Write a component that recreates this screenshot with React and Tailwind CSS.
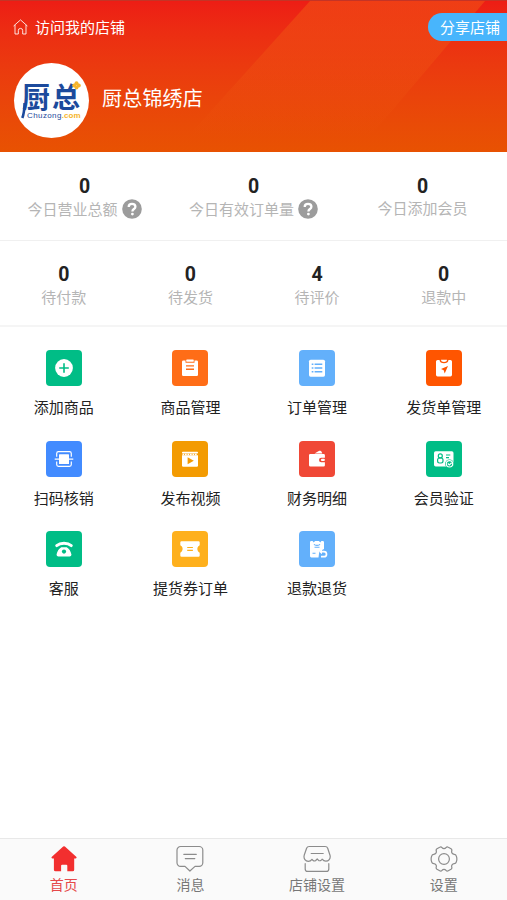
const todayStats = [
  { label: '今日营业总额', value: 0, help: true },
  { label: '今日有效订单量', value: 0, help: true },
  { label: '今日添加会员', value: 0 },
];

const orderStats = [
  { label: '待付款', value: 0 },
  { label: '待发货', value: 0 },
  { label: '待评价', value: 4 },
  { label: '退款中', value: 0 },
];

// Menu glyphs, all drawn on the 36px tile grid
const AddIcon = () => (
  <>
    <circle cx="18" cy="18" r="8.9" fill="#fff" />
    <path d="M18 13.2v9.600M13.200 18h9.600" stroke="#00bd86" strokeWidth="1.600" />
  </>
);

const GoodsIcon = () => (
  <>
    <path d="M11.300 10.500h2.200v2.200h9v-2.200h2.200a1.300 1.300 0 0 1 1.300 1.300v13a1.300 1.300 0 0 1-1.300 1.300H11.300a1.300 1.300 0 0 1-1.300-1.300v-13a1.300 1.300 0 0 1 1.300-1.300z" fill="#fff" />
    <rect x="14.300" y="9.600" width="7.400" height="2.200" rx=".6" fill="#fff" />
    <path d="M14 15.900h8M14 19.200h8" stroke="#ff6d17" strokeWidth="1.400" />
  </>
);

const OrderIcon = () => (
  <>
    <rect x="10" y="9.700" width="16" height="17" rx="1.600" fill="#fff" />
    <path d="M12.700 14.200h1.700M12.700 18h1.700M12.700 21.800h1.700M15.600 14.200h7.700M15.600 18h7.700M15.600 21.800h7.700" stroke="#63b0fb" strokeWidth="1.400" />
  </>
);

const DeliveryIcon = () => (
  <>
    <path d="M11.600 10h1.900c.3 2.200 1.800 3.200 4.500 3.200s4.200-1 4.500-3.200h1.900a1.600 1.600 0 0 1 1.600 1.600v13.200a1.600 1.600 0 0 1-1.600 1.600H11.600a1.600 1.600 0 0 1-1.600-1.600V11.600a1.600 1.600 0 0 1 1.600-1.600z" fill="#fff" />
    <path d="M15 9.700h6c0 1.600-1.200 2.200-3 2.200s-3-.6-3-2.200z" fill="#fff" />
    <path d="M22 16l-7 3.100 2.700 1.200 1 3.300z" fill="#ff5500" />
  </>
);

const ScanIcon = () => (
  <>
    <path d="M10.700 15.800v-3.300a1.800 1.800 0 0 1 1.800-1.800h11a1.800 1.800 0 0 1 1.800 1.800v3.300M10.700 20.500v3a1.800 1.800 0 0 0 1.800 1.800h11a1.800 1.800 0 0 0 1.800-1.800v-3" fill="none" stroke="#fff" strokeWidth="1.200" />
    <rect x="13" y="13.200" width="10" height="9.800" rx=".6" fill="#fff" />
    <path d="M8.700 18.200h18.600" stroke="#fff" strokeWidth="1.200" />
  </>
);

const VideoIcon = () => (
  <>
    <rect x="10" y="10.800" width="16" height="1.800" rx=".8" fill="#fff" />
    <path d="M10.500 13.500h15" stroke="#fff" strokeWidth="1.500" strokeDasharray="1.700 .8" />
    <path d="M10 14.300h16v10.300a1.200 1.200 0 0 1-1.200 1.200H11.200a1.200 1.200 0 0 1-1.200-1.200z" fill="#fff" />
    <path d="M15.600 16.300l6.200 3.500-6.200 3.500z" fill="#f39b02" />
  </>
);

const FinanceIcon = () => (
  <>
    <path d="M11.400 13h13.200a1.300 1.300 0 0 1 1.300 1.300v2.400h-3.600a2.300 2.300 0 0 0 0 4.600h3.600v3a1.300 1.300 0 0 1-1.300 1.300H11.400a1.400 1.400 0 0 1-1.400-1.300V14.300A1.300 1.300 0 0 1 11.400 13z" fill="#fff" />
    <path d="M15.500 12.400l4.300-2.400c1.200-.6 2.400 0 2.900 1l.6 1.400z" fill="#fff" />
    <rect x="21.900" y="17.800" width="4" height="2.300" rx="1.100" fill="#fff" />
  </>
);

const MemberIcon = () => (
  <>
    <rect x="8" y="10.300" width="19.500" height="15.200" rx="1.700" fill="#fff" />
    <g fill="none" stroke="#00bd86" strokeWidth="1.200">
      <circle cx="14.300" cy="14.900" r="2" />
      <rect x="11.600" y="17" width="5.400" height="5" rx="1.900" />
      <path d="M20 14h4.300M20 16.700h3" />
    </g>
    <circle cx="23.500" cy="22.800" r="4.400" fill="#00bd86" />
    <circle cx="23.500" cy="22.800" r="3.200" fill="none" stroke="#fff" strokeWidth="1.200" />
    <path d="M21.800 22.500l1.500 1.400 2.400-2.200" fill="none" stroke="#fff" strokeWidth="1.200" />
  </>
);

const ServiceIcon = () => (
  <>
    <path d="M10.700 14.600c3.700-3.200 10.900-3.200 14.600 0" fill="none" stroke="#fff" strokeWidth="2.900" strokeLinecap="round" />
    <path d="M15.300 16.200h5.400c2.200 1.100 4.200 4.200 4.700 7 .2 1.100-.6 2.300-1.800 2.300H12.400c-1.200 0-2-1.200-1.800-2.300.5-2.800 2.500-5.900 4.700-7z" fill="#fff" />
    <circle cx="18" cy="20.600" r="2.100" fill="#00bd86" />
  </>
);

const VoucherIcon = () => (
  <>
    <path d="M9.500 10.300h17a1.200 1.200 0 0 1 1.200 1.200v2.800c-3.100 1.600-3.100 5.800 0 7.400v2.800a1.200 1.200 0 0 1-1.200 1.200h-17a1.200 1.200 0 0 1-1.200-1.200v-2.800c3.100-1.600 3.100-5.800 0-7.400v-2.800a1.200 1.200 0 0 1 1.200-1.200z" fill="#fff" />
    <path d="M15.200 16.500h5.700M15.200 19.400h5.700" stroke="#feb01d" strokeWidth="1.200" />
  </>
);

const RefundIcon = () => (
  <>
    <path d="M12.300 10h1.300l1.200 1.600L16 10h4l1.200 1.600 1.200-1.600h1.300a1.300 1.300 0 0 1 1.300 1.300V18l-4.700 2.500-.8 5.900h-7.200a1.300 1.300 0 0 1-1.300-1.300V11.300a1.300 1.300 0 0 1 1.300-1.300z" fill="#fff" />
    <path d="M15 13.200c1 1.500 5 1.500 6 0M15.500 16.300h5M13.500 22.200h3" fill="none" stroke="#63b0fb" strokeWidth="1.100" />
    <path d="M22 20.700h3a2.500 2.500 0 0 1 0 5h-3" fill="none" stroke="#fff" strokeWidth="1.700" />
    <path d="M23 18.200v5l-3-2.500z" fill="#fff" />
  </>
);

const menus = [
  { label: '添加商品', color: 'bg-[#00bd86]', icon: AddIcon },
  { label: '商品管理', color: 'bg-[#ff6d17]', icon: GoodsIcon },
  { label: '订单管理', color: 'bg-[#63b0fb]', icon: OrderIcon },
  { label: '发货单管理', color: 'bg-[#ff5500]', icon: DeliveryIcon },
  { label: '扫码核销', color: 'bg-[#428bff]', icon: ScanIcon },
  { label: '发布视频', color: 'bg-[#f39b02]', icon: VideoIcon },
  { label: '财务明细', color: 'bg-[#f04836]', icon: FinanceIcon },
  { label: '会员验证', color: 'bg-[#00bd86]', icon: MemberIcon },
  { label: '客服', color: 'bg-[#00bd86]', icon: ServiceIcon },
  { label: '提货券订单', color: 'bg-[#feb01d]', icon: VoucherIcon },
  { label: '退款退货', color: 'bg-[#63b0fb]', icon: RefundIcon },
];

// Bottom tab glyphs on a 28px grid
const HomeTab = () => (
  <path d="M13.200 1.500a1.300 1.300 0 0 1 1.700 0l11.300 10.300c.8.700.4 1.700-.6 1.700h-1.400v11.200a1.600 1.600 0 0 1-1.600 1.600h-5.300v-5.600a1 1 0 0 0-1-1h-4.200a1 1 0 0 0-1 1v5.600H5.500a1.600 1.600 0 0 1-1.600-1.600V13.500H2.500c-1 0-1.400-1-.6-1.700z" fill="#f22f2f" />
);

const MessageTab = () => (
  <g fill="none" stroke="#8c8c8c" strokeWidth="1.200" strokeLinecap="round" strokeLinejoin="round">
    <path d="M4.600 1.500h18.600a3.600 3.600 0 0 1 3.600 3.600v12.700a3.600 3.600 0 0 1-3.600 3.600H19L13.900 26l-4.900-4.600H4.600A3.600 3.600 0 0 1 1 17.800V5.100a3.600 3.600 0 0 1 3.600-3.600z" />
    <path d="M7.800 9.300h12.500M9.300 13.600h9.500" />
  </g>
);

const ShopTab = () => (
  <g fill="none" stroke="#8c8c8c" strokeWidth="1.200" strokeLinecap="round" strokeLinejoin="round">
    <path d="M6.300 1.500h15.800c1.300 0 2.200.6 2.600 1.700l2.300 7c.9 3.500-1.500 6-4.200 6-1.700 0-2.700-.8-3.700-2-.9 1.400-2.300 2-3.500 1.200L14.200 14l-1.500 1.500c-1.300 1.100-2.800.3-3.700-1.200-.9 1.200-2 2-3.700 2-2.700 0-5-2.500-4.100-6l2.400-7.100c.4-1.100 1.300-1.700 2.700-1.700zM8.200 8.500h12" />
    <path d="M2.200 18.700v5.200a2.500 2.500 0 0 0 2.500 2.500h18.600a2.500 2.500 0 0 0 2.500-2.500v-5.200" />
  </g>
);

const SettingTab = () => (
  <g fill="none" stroke="#8c8c8c" strokeWidth="1.200" strokeLinejoin="round">
    <path d="M9.700 2.200c1-.6 1.700-.3 2.300.4 1.100 1.400 2.900 1.400 4 0 .6-.7 1.300-1 2.300-.4l2.700 1.500c1 .6 1 1.200.8 2.100-.6 1.900.5 3.300 2.400 3.500 1 .1 1.700.5 2 1.400.7 1.700.7 4.900 0 6.600-.3.900-1 1.300-2 1.400-1.900.2-3 1.600-2.400 3.500.2.900.2 1.500-.8 2.100l-2.700 1.500c-1 .6-1.700.3-2.300-.4-1.100-1.400-2.900-1.400-4 0-.6.700-1.300 1-2.300.4L7 24.300c-1-.6-1-1.200-.8-2.100.6-1.900-.5-3.300-2.400-3.500-1-.1-1.700-.5-2-1.400-.7-1.700-.7-4.900 0-6.600.3-.9 1-1.300 2-1.400 1.900-.2 3-1.600 2.400-3.500C6 4.900 6 4.300 7 3.700z" />
    <circle cx="14" cy="14" r="5.400" />
  </g>
);

const tabs = [
  { label: '首页', icon: HomeTab, active: true },
  { label: '消息', icon: MessageTab },
  { label: '店铺设置', icon: ShopTab },
  { label: '设置', icon: SettingTab },
];

function HelpIcon() {
  return (
    <svg className="ml-1 h-5 w-5" viewBox="0 0 20 20">
      <circle cx="10" cy="10" r="9.800" fill="#9c9c9c" />
      <path d="M6.700 7.900c0-1.900 1.400-3 3.300-3s3.400 1.100 3.400 2.800c0 2.300-3 2.300-3 4.700" fill="none" stroke="#fff" strokeWidth="2.300" />
      <circle cx="10.400" cy="15.100" r="1.400" fill="#fff" />
    </svg>
  );
}

function Logo() {
  return (
    <div className="relative h-[75px] w-[75px] shrink-0 overflow-hidden rounded-full bg-white">
      <div className="absolute top-[19px] left-[8px] text-[28px] leading-[28px] font-bold tracking-[2px] whitespace-nowrap text-[#1c4a9c]">厨总</div>
      {/* long left leg of the wordmark */}
      <svg className="absolute top-[40px] left-[7px] h-4 w-1.5" viewBox="0 0 6 16">
        <path d="M3.600 0C3.400 6 3 11 1.300 15" fill="none" stroke="#1c4a9c" strokeWidth="2.600" />
      </svg>
      <svg className="absolute top-[18px] left-[58px] h-[9px] w-[9px]" viewBox="0 0 9 9" fill="#f5b52c">
        <circle cx="4.500" cy="2.200" r="2" />
        <circle cx="2.200" cy="4.500" r="2" />
        <circle cx="6.800" cy="4.500" r="2" />
        <circle cx="4.500" cy="6.500" r="2" />
      </svg>
      <div className="absolute top-[49px] left-[13px] font-['Liberation_Sans'] text-[8px] leading-[8px] whitespace-nowrap text-[#1c4a9c]">
        <span className="tracking-[0.4px]">Chuzong</span>
        <b className="text-[#f5b52c]">.com</b>
      </div>
    </div>
  );
}

function Header() {
  return (
    <header className="relative h-[152px] border-t border-[#c43426] bg-linear-to-b from-[#ed1d15] to-[#e85202] text-white">
      {/* slanted lighter band */}
      <div className="absolute inset-0 bg-linear-to-b from-[#f2641473] to-[#f2641400] to-90% [clip-path:polygon(310px_0,485px_0,357px_100%,174px_100%)]" />
      <div className="relative flex h-[52px] items-center justify-between pl-[13px]">
        <div className="flex items-center text-[15px]">
          <svg className="mr-[7px] h-4 w-[15px]" viewBox="0 0 15 16" fill="none" stroke="#fff" strokeOpacity=".85" strokeLinejoin="round">
            <path d="M.6 7L7.500.9 14.400 7M2 6v9h3.300v-3.400a2.200 2.200 0 0 1 4.400 0V15H13V6" />
          </svg>
          访问我的店铺
        </div>
        <div className="h-7 w-[79px] rounded-l-full bg-[#48b5fc] pl-[12px] text-[15px] leading-7 whitespace-nowrap">分享店铺</div>
      </div>
      <div className="relative mt-[10px] flex items-center pl-[14px]">
        <Logo />
        <h1 className="mb-[6px] ml-[13px] text-[20px] leading-[28px] tracking-[0.2px]">厨总锦绣店</h1>
      </div>
    </header>
  );
}

export default function App() {
  return (
    <div className="flex h-[900px] w-full flex-col overflow-hidden bg-white font-['Noto_Sans_CJK_SC',sans-serif] text-[#222]">
      <Header />
      <section className="grid h-[89px] grid-cols-3 border-b border-[#f0f0f0] pt-[23px]">
        {todayStats.map((item) => (
          <div key={item.label} className="flex flex-col items-center">
            <b className="font-[Roboto] text-[19.5px] leading-[23px]">{item.value}</b>
            <div className={`flex items-center text-[15px] leading-5 text-[#b5b5b5] ${item.help ? 'mt-[1px]' : ''}`}>
              {item.label}
              {item.help && <HelpIcon />}
            </div>
          </div>
        ))}
      </section>
      <section className="grid h-[86px] grid-cols-4 border-b-2 border-[#f5f5f5] pt-[22px] pl-[0.5px]">
        {orderStats.map((item) => (
          <div key={item.label} className="flex flex-col items-center">
            <b className="font-[Roboto] text-[19.5px] leading-[23px]">{item.value}</b>
            <div className="text-[15px] leading-[22px] text-[#b5b5b5]">{item.label}</div>
          </div>
        ))}
      </section>
      <main className="grid flex-1 auto-rows-[90.5px] grid-cols-4 pt-[23px] pl-[0.5px]">
        {menus.map(({ label, color, icon: Icon }) => (
          <div key={label} className="flex flex-col items-center">
            <svg className={`h-9 w-9 rounded-[4px] ${color}`} viewBox="0 0 36 36">
              <Icon />
            </svg>
            <div className="mt-[9px] text-[15px] leading-6">{label}</div>
          </div>
        ))}
      </main>
      <nav className="grid h-[62px] grid-cols-4 border-t border-[#e8e8e8] bg-[#fafafa] pt-[6px] pl-[0.5px]">
        {tabs.map(({ label, icon: Icon, active }) => (
          <div key={label} className="flex flex-col items-center">
            <svg className="h-7 w-7" viewBox="0 0 28 28">
              <Icon />
            </svg>
            <div className={`mt-px text-[14px] leading-5 ${active ? 'text-[#e5484a]' : 'text-[#777]'}`}>{label}</div>
          </div>
        ))}
      </nav>
    </div>
  );
}
